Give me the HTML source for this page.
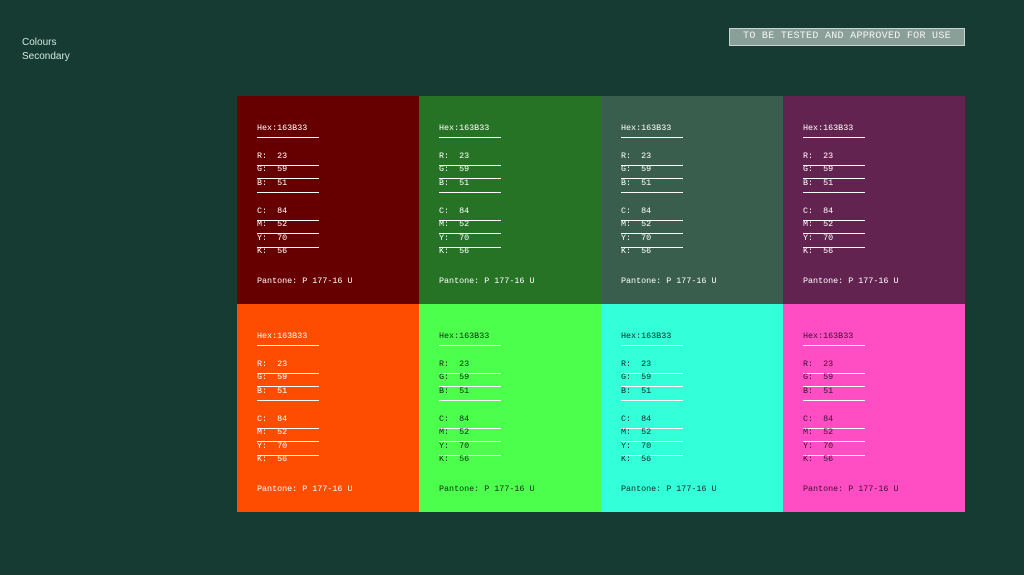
<html><head><style>
body{margin:0;width:1024px;height:575px;background:#163b33;position:relative;overflow:hidden;font-family:"Liberation Mono",monospace}
.t{position:absolute;left:22px;color:#cfe9dc;font:10px/14px "Liberation Sans",sans-serif}
.badge{position:absolute;left:729px;top:28px;width:236px;height:18px;background:#8a9f97;border:1px solid #c8d4cf;box-sizing:border-box;color:#f2f6f4;font-size:10px;line-height:16px;text-align:center;letter-spacing:0.3px}
.c{position:absolute;width:182px;height:208px}
.c span{position:absolute;left:20px;font-size:8.4px;line-height:10px;white-space:pre}
.c i{position:absolute;left:20px;width:62px;height:1px}
</style></head><body>
<div class="t" style="top:36px">Colours<br>Secondary</div>
<div class="badge">TO BE TESTED AND APPROVED FOR USE</div>
<div id="g"></div>
<script>
var cols=[["#660000","#fff"],["#267326","#fff"],["#395e4e","#fff"],["#632350","#fff"],["#ff4d00","#fff"],["#4dff4d","#0d2a14"],["#33ffd9","#0d2a24"],["#ff4dc4","#3a1030"]];
var rows=[[0,"Hex:163B33",1],[28,"R:  23",1],[41,"G:  59",1],[55,"B:  51",1],[83,"C:  84",1],[96,"M:  52",1],[110,"Y:  70",1],[123,"K:  56",0],[153,"Pantone: P 177-16 U",0]];
var h="";
cols.forEach(function(c,i){
 var x=237+(i%4)*182,y=96+Math.floor(i/4)*208;
 h+='<div class="c" style="left:'+x+'px;top:'+y+'px;background:'+c[0]+';color:'+c[1]+'">';
 rows.forEach(function(r){var b=35+r[0];
  h+='<span style="top:'+(b-8)+'px">'+r[1]+'</span>';
  if(r[2])h+='<i style="top:'+(b+6)+'px;background:#fff"></i>';});
 h+='</div>';});
document.getElementById("g").innerHTML=h;
</script>
</body></html>
